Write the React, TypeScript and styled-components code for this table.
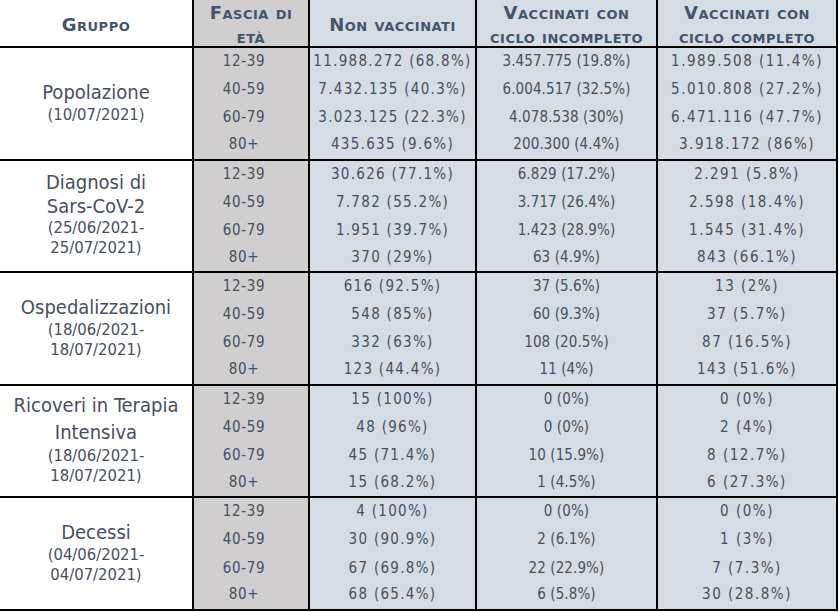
import React from "react";
import styled, { createGlobalStyle } from "styled-components";

const Global = createGlobalStyle`
  html, body { margin: 0; padding: 0; background: #ffffff; }
  body { font-family: "DejaVu Sans Condensed", "DejaVu Sans", sans-serif; }
`;

const Grid = styled.div`
  display: grid;
  grid-template-columns: 194px 116px 167px 181px 180px;
  grid-template-rows: 48px repeat(20, 28.15px);
  width: 838px;
  color: #46505e;
  font-family: "DejaVu Sans Condensed", "DejaVu Sans", sans-serif;
  font-stretch: condensed;
`;

const COL_BG = ["#ffffff", "#d0cece", "#d6dce4", "#d6dce4", "#d6dce4"];

const HeaderCell = styled.div<{ $col: number }>`
  box-sizing: border-box;
  background: ${(p) => COL_BG[p.$col]};
  border-right: 2px solid #000;
  border-bottom: 2px solid #000;
  display: flex;
  align-items: center;
  justify-content: center;
  text-align: center;
  font-family: "DejaVu Sans", sans-serif;
  font-stretch: normal;
  font-weight: bold;
  font-variant: small-caps;
  font-size: 18px;
  letter-spacing: 0.5px;
  line-height: 24px;
  color: #44546a;
  padding-top: 3px;
`;

const GroupCell = styled.div`
  box-sizing: border-box;
  grid-row: span 4;
  background: #ffffff;
  border-right: 2px solid #000;
  border-bottom: 2px solid #000;
  display: flex;
  flex-direction: column;
  align-items: center;
  justify-content: center;
  text-align: center;
  padding-bottom: 3px;
`;

const Title = styled.span<{ $lh: number }>`
  font-size: 20px;
  line-height: ${(p) => p.$lh}px;
`;

const DateLine = styled.span`
  font-size: 16.5px;
  line-height: 20px;
`;

const Cell = styled.div<{ $col: number; $last: boolean; $ls: number; $shift: number }>`
  box-sizing: border-box;
  background: ${(p) => COL_BG[p.$col]};
  border-right: 2px solid #000;
  border-bottom: ${(p) => (p.$last ? "2px solid #000" : "none")};
  display: flex;
  align-items: center;
  justify-content: center;
  font-size: 15px;
  letter-spacing: ${(p) => p.$ls}px;
  padding-bottom: ${(p) => (p.$last ? 3 : 2)}px;
  padding-right: ${(p) => p.$shift}px;
  white-space: nowrap;
`;

type Group = { title: string[]; lh: number; dates: string[]; rows: string[][] };

const AGES = ["12-39", "40-59", "60-79", "80+"];

const GROUPS: Group[] = [
  {
    title: ["Popolazione"],
    lh: 26,
    dates: ["(10/07/2021)"],
    rows: [
      ["11.988.272 (68.8%)", "3.457.775 (19.8%)", "1.989.508 (11.4%)"],
      ["7.432.135 (40.3%)", "6.004.517 (32.5%)", "5.010.808 (27.2%)"],
      ["3.023.125 (22.3%)", "4.078.538 (30%)", "6.471.116 (47.7%)"],
      ["435.635 (9.6%)", "200.300 (4.4%)", "3.918.172 (86%)"],
    ],
  },
  {
    title: ["Diagnosi di", "Sars-CoV-2"],
    lh: 24,
    dates: ["(25/06/2021-", "25/07/2021)"],
    rows: [
      ["30.626 (77.1%)", "6.829 (17.2%)", "2.291 (5.8%)"],
      ["7.782 (55.2%)", "3.717 (26.4%)", "2.598 (18.4%)"],
      ["1.951 (39.7%)", "1.423 (28.9%)", "1.545 (31.4%)"],
      ["370 (29%)", "63 (4.9%)", "843 (66.1%)"],
    ],
  },
  {
    title: ["Ospedalizzazioni"],
    lh: 26,
    dates: ["(18/06/2021-", "18/07/2021)"],
    rows: [
      ["616 (92.5%)", "37 (5.6%)", "13 (2%)"],
      ["548 (85%)", "60 (9.3%)", "37 (5.7%)"],
      ["332 (63%)", "108 (20.5%)", "87 (16.5%)"],
      ["123 (44.4%)", "11 (4%)", "143 (51.6%)"],
    ],
  },
  {
    title: ["Ricoveri in Terapia", "Intensiva"],
    lh: 27,
    dates: ["(18/06/2021-", "18/07/2021)"],
    rows: [
      ["15 (100%)", "0 (0%)", "0 (0%)"],
      ["48 (96%)", "0 (0%)", "2 (4%)"],
      ["45 (71.4%)", "10 (15.9%)", "8 (12.7%)"],
      ["15 (68.2%)", "1 (4.5%)", "6 (27.3%)"],
    ],
  },
  {
    title: ["Decessi"],
    lh: 26,
    dates: ["(04/06/2021-", "04/07/2021)"],
    rows: [
      ["4 (100%)", "0 (0%)", "0 (0%)"],
      ["30 (90.9%)", "2 (6.1%)", "1 (3%)"],
      ["67 (69.8%)", "22 (22.9%)", "7 (7.3%)"],
      ["68 (65.4%)", "6 (5.8%)", "30 (28.8%)"],
    ],
  },
];

const SPACING = [1.3, 0.1, 1.5];

export default function App() {
  return (
    <>
      <Global />
      <Grid>
        <HeaderCell $col={0}>Gruppo</HeaderCell>
        <HeaderCell $col={1}>
          Fascia di
          <br />
          età
        </HeaderCell>
        <HeaderCell $col={2}>Non vaccinati</HeaderCell>
        <HeaderCell $col={3}>
          Vaccinati con
          <br />
          ciclo incompleto
        </HeaderCell>
        <HeaderCell $col={4}>
          Vaccinati con
          <br />
          ciclo completo
        </HeaderCell>
        {GROUPS.map((g, gi) => (
          <React.Fragment key={gi}>
            <GroupCell>
              {g.title.map((t) => (
                <Title key={t} $lh={g.lh}>
                  {t}
                </Title>
              ))}
              {g.dates.map((d) => (
                <DateLine key={d}>{d}</DateLine>
              ))}
            </GroupCell>
            {g.rows.map((r, ri) => (
              <React.Fragment key={ri}>
                <Cell $col={1} $last={ri === 3} $ls={0.7} $shift={14}>
                  {AGES[ri]}
                </Cell>
                {r.map((v, ci) => (
                  <Cell
                    key={ci}
                    $col={ci + 2}
                    $last={ri === 3}
                    $ls={SPACING[ci]}
                    $shift={0}
                  >
                    {v}
                  </Cell>
                ))}
              </React.Fragment>
            ))}
          </React.Fragment>
        ))}
      </Grid>
    </>
  );
}
